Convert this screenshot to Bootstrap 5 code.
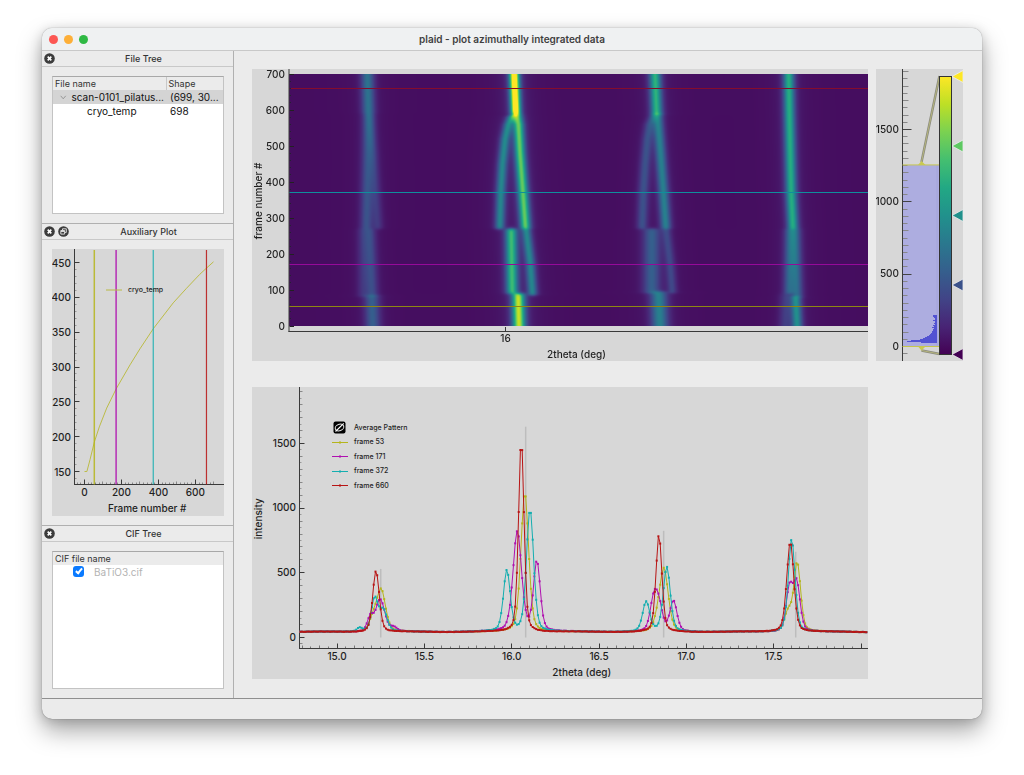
<!DOCTYPE html>
<html lang="en">
<head>
<meta charset="utf-8">
<meta name="viewport" content="width=device-width, initial-scale=1">
<title>plaid - plot azimuthally integrated data</title>
<link rel="stylesheet" href="https://cdn.jsdelivr.net/npm/bootstrap@5.3.0/dist/css/bootstrap.min.css">
<style>
  body { font-family: Inter, "Liberation Sans", sans-serif; font-size: 10px; line-height: 14px; color: #1c1c1c; background: #fff; padding: 28px 42px 56px; }
  .app-window { background: #ebebeb; border-radius: 10px; box-shadow: 0 0 1px rgba(0,0,0,.55), 0 12px 24px rgba(0,0,0,.34), 0 2px 12px rgba(0,0,0,.16); overflow: hidden; }
  .title-bar { height: 23px; background: #eff1f2; border-bottom: 1px solid #c8c8c8; }
  .title-bar h1 { font-size: 10px; line-height: 22px; font-weight: 600; color: #3f3f3f; padding-right: 60px; }
  .lights { width: 60px; padding-left: 7px; gap: 6px; }
  .light { width: 9px; height: 9px; border: 0; padding: 0; border-radius: 50%; background: #fc5753; }
  .light.min { background: #fdaf38; }
  .light.max { background: #2fb944; }
  .side { width: 192px; border-right: 1px solid #b0b0b0; }
  .dock { flex: 172 1 0; min-height: 0; }
  .dock + .dock { border-top: 1px solid #b0b0b0; }
  .dock.tall { flex-grow: 300; }
  .dock-head { height: 16px; border-bottom: 1px solid #c8c8c8; padding: 0 4px 0 2px; gap: 3px; }
  .dock-head h2 { font-size: 9px; line-height: 15px; color: #333; }
  .dock-head button { width: 11px; height: 15px; border: 0; padding: 0; background: none; display: flex; align-items: center; }
  .dock-body { padding: 9px 9px 9px 10px; }
  .tree { background: #fff; border: 1px solid #c3c3c3; border-top-color: #a8a8a8; }
  .tree table { width: 100%; table-layout: fixed; border-collapse: collapse; }
  .tree th { background: #ebebeb; font-size: 9px; line-height: 13px; font-weight: 400; padding: 0 2px; color: #333; }
  .tree th + th { border-left: 1px solid #c8c8c8; }
  .tree td { line-height: 14px; padding: 0 2px; color: #111; white-space: nowrap; overflow: hidden; }
  .tree .picked td { background: #d4d4d4; }
  .tick { appearance: none; width: 11px; height: 11px; margin: 0 0 0 18px; border-radius: 3px; background: #0a7aff; display: grid; place-items: center; }
  .tick:checked::after { content: ""; width: 4px; height: 7px; margin-top: -2px; border: solid #fff; border-width: 0 2px 2px 0; transform: rotate(40deg); }
  .faded { color: #b3b3b3; padding-left: 10px; }
  .plots { display: grid; grid-template-columns: minmax(0,1fr) 87px; grid-template-rows: minmax(0,1fr) minmax(0,1fr); gap: 26px 8px; padding: 18px 19px 19px 18px; min-width: 0; }
  .plot { background: #d7d7d7; min-width: 0; min-height: 0; position: relative; }
  .plot svg, .plot canvas { position: absolute; inset: 0; width: 100%; height: 100%; }
  .plot text { font-size: 10px; font-weight: 500; fill: #1f1f1f; }
  .plot text.key { font-size: 7px; }
  .status-bar { height: 21px; border-top: 1px solid #8f8f8f; }
</style>
</head>
<body class="min-vh-100 d-flex flex-column">
<div class="app-window flex-grow-1 d-flex flex-column">
  <header class="title-bar d-flex align-items-center">
    <div class="lights d-flex">
      <button class="light" aria-label="Close"></button>
      <button class="light min" aria-label="Minimise"></button>
      <button class="light max" aria-label="Zoom"></button>
    </div>
    <h1 class="m-0 flex-grow-1 text-center">plaid - plot azimuthally integrated data</h1>
  </header>

  <div class="flex-grow-1 d-flex">
    <aside class="side d-flex flex-column flex-shrink-0">
      <section class="dock d-flex flex-column">
        <div class="dock-head d-flex">
          <button aria-label="Close File Tree"><svg width="11" height="11" viewBox="0 0 11 11"><circle cx="5.500" cy="5.500" r="5.300" fill="#3c3c3c"/><path d="M3.700 3.700l3.600 3.600M7.300 3.700l-3.600 3.600" stroke="#fff" stroke-width="1.700"/></svg></button>
          <h2 class="m-0 flex-grow-1 text-center">File Tree</h2>
        </div>
        <div class="dock-body flex-grow-1 d-flex">
          <div class="tree flex-grow-1">
            <table>
              <colgroup><col><col style="width:57px"></colgroup>
              <thead><tr><th>File name</th><th>Shape</th></tr></thead>
              <tbody>
                <tr class="picked"><td><span class="d-flex align-items-center"><svg class="ms-1 me-1" width="10" height="7" viewBox="0 0 10 7"><path d="M2 1.500l3 3.500 3-3.500" fill="none" stroke="#8c8c8c"/></svg>scan-0101_pilatus...</span></td><td class="ps-1">(699, 30...</td></tr>
                <tr><td><span class="ms-4 ps-2">cryo_temp</span></td><td class="ps-1">698</td></tr>
              </tbody>
            </table>
          </div>
        </div>
      </section>

      <section class="dock tall d-flex flex-column">
        <div class="dock-head d-flex">
          <button aria-label="Close Auxiliary Plot"><svg width="11" height="11" viewBox="0 0 11 11"><circle cx="5.500" cy="5.500" r="5.300" fill="#3c3c3c"/><path d="M3.700 3.700l3.600 3.600M7.300 3.700l-3.600 3.600" stroke="#fff" stroke-width="1.700"/></svg></button>
          <button aria-label="Float Auxiliary Plot"><svg width="11" height="11" viewBox="0 0 11 11"><circle cx="5.500" cy="5.500" r="5.300" fill="#3c3c3c"/><path d="M4.500 4.300V2.800h3.800v3.600H6.800M2.800 4.500h3.800v3.600H2.800zM3 5.500h3.500" fill="none" stroke="#e8e8e8" stroke-width=".9"/></svg></button>
          <h2 class="m-0 flex-grow-1 text-center pe-1">Auxiliary Plot</h2>
        </div>
        <div class="dock-body flex-grow-1 d-flex"><div class="plot flex-grow-1"><svg id="aux" role="img" aria-label="cryo_temp by frame"></svg></div></div>
      </section>

      <section class="dock d-flex flex-column">
        <div class="dock-head d-flex">
          <button aria-label="Close CIF Tree"><svg width="11" height="11" viewBox="0 0 11 11"><circle cx="5.500" cy="5.500" r="5.300" fill="#3c3c3c"/><path d="M3.700 3.700l3.600 3.600M7.300 3.700l-3.600 3.600" stroke="#fff" stroke-width="1.700"/></svg></button>
          <h2 class="m-0 flex-grow-1 text-center">CIF Tree</h2>
        </div>
        <div class="dock-body flex-grow-1 d-flex">
          <div class="tree flex-grow-1">
            <table>
              <thead><tr><th>CIF file name</th></tr></thead>
              <tbody><tr><td><span class="d-flex align-items-center"><input class="tick" type="checkbox" id="cif" checked><label class="faded" for="cif">BaTiO3.cif</label></span></td></tr></tbody>
            </table>
          </div>
        </div>
      </section>
    </aside>

    <main class="plots flex-grow-1">
      <div class="plot"><canvas id="heat"></canvas><svg id="map" role="img" aria-label="Intensity map"></svg></div>
      <div class="plot"><svg id="levels" role="img" aria-label="Colour levels"></svg></div>
      <div class="plot"><svg id="pattern" role="img" aria-label="Diffraction patterns"></svg></div>
    </main>
  </div>
  <footer class="status-bar"></footer>
</div>

<script src="https://cdn.jsdelivr.net/npm/bootstrap@5.3.0/dist/js/bootstrap.bundle.min.js"></script>
<script>
const INK = '#3a3a3a';
const FRAMES = [[53, '#b5b51c'], [171, '#b010b0'], [372, '#14aeb0'], [660, '#b81414']];
const T0 = 14.785, T1 = 18.04;
const el = id => document.getElementById(id);
const line = (x1, y1, x2, y2, c = INK, w = 1, more = '') => `<line x1="${x1}" y1="${y1}" x2="${x2}" y2="${y2}" stroke="${c}" stroke-width="${w}" ${more}/>`;
const text = (x, y, s, a = 'middle', more = '') => `<text x="${x}" y="${y}" text-anchor="${a}" ${more}>${s}</text>`;
const snap = v => Math.floor(v) + .5;
const poly = (pts, c, w = 1) => `<polyline points="${pts.map(p => p[0].toFixed(1) + ',' + p[1].toFixed(1)).join(' ')}" fill="none" stroke="${c}" stroke-width="${w}"/>`;

// pseudo-Voigt peak
function voigt(x, c, a, f) {
  const u = (x - c) / f;
  return a * (.35 / (1 + 4 * u * u) + .65 * Math.exp(-2.77 * u * u));
}

function drawAux() {
  const s = el('aux'), W = s.clientWidth, H = s.clientHeight, ax = 22.5, ay = H - 30.5;
  const X = v => 32.5 + v * (W - 43) / 698, Y = v => 13.5 + (450 - v) * (H - 57) / 300;
  let o = '';
  for (let v = 140; v <= 450; v += 10) {
    const big = v % 50 === 0;
    o += line(ax, snap(Y(v)), ax + (big ? 5 : 2), snap(Y(v)), big ? INK : '#999');
    if (big) o += text(19, Math.round(Y(v) + 4), v, 'end');
  }
  for (let v = -40; v <= 700; v += 20) {
    const big = v % 200 === 0;
    o += line(snap(X(v)), ay, snap(X(v)), ay - (big ? 5 : v % 100 ? 2 : 3), big ? INK : '#888');
    if (big) o += text(X(v), H - 19, v);
  }
  o += line(ax, 0, ax, ay) + line(ax - .5, ay, W, ay);
  const d = [[0,150],[13,150],[30,167],[53,192],[80,214],[120,241],[172,269],[246,303],[300,326],[372,355],[480,392],[552,413],[624,433],[660,442],[698,451]];
  o += poly(d.map(p => [X(p[0]), Y(p[1])]), '#bcbc48');
  FRAMES.forEach(([f, c], i) => o += line(X(f), 1, X(f), ay, c, i < 2 ? 1.5 : 1.2, 'opacity=".85"'));
  o += line(54, 41, 70, 41, '#b9b945') + text(76, 43, 'cryo_temp', 'start', 'class="key"');
  s.innerHTML = o + text((W + ax) / 2 - 2, H - 3, 'Frame number #');
}

const VIRIDIS = [[68,1,84],[72,36,117],[65,68,135],[53,95,141],[42,120,142],[33,145,140],[34,168,132],[68,191,112],[122,209,81],[189,223,38],[253,231,37]];
function viridis(v) {
  const p = Math.max(0, Math.min(.9999, v)) * 10, i = Math.floor(p), f = p - i;
  return VIRIDIS[i].map((c, k) => c + (VIRIDIS[i + 1][k] - c) * f);
}
// reflection tracks: first frame, last frame, amplitude, width, [frame, 2theta] knots
const TRACKS = [
  [590, 760, 430, .060, [[590,15.232],[700,15.226]]],
  [270, 590, 270, .058, [[270,15.220],[590,15.232]]],
  [270, 590, 150, .050, [[270,15.285],[372,15.272],[480,15.258],[590,15.235]]],
  [82, 270, 240, .060, [[82,15.252],[270,15.236]]],
  [82, 270, 120, .055, [[82,15.200],[270,15.200]]],
  [-60, 85, 330, .070, [[0,15.256],[85,15.250]]],
  [590, 760, 1480, .046, [[588,16.060],[700,16.051]]],
  [270, 590, 900, .050, [[270,16.115],[372,16.100],[480,16.084],[560,16.075],[590,16.064]]],
  [270, 588, 520, .046, [[270,15.970],[372,15.976],[450,15.985],[520,16.000],[560,16.018],[580,16.036],[590,16.056]]],
  [90, 270, 800, .056, [[90,16.040],[270,16.034]]],
  [86, 270, 510, .046, [[86,16.154],[171,16.142],[270,16.118]]],
  [-60, 90, 1100, .060, [[0,16.078],[90,16.073]]],
  [588, 760, 760, .054, [[588,16.852],[700,16.843]]],
  [270, 590, 490, .050, [[270,16.904],[372,16.890],[480,16.874],[590,16.856]]],
  [270, 588, 260, .050, [[270,16.770],[372,16.777],[450,16.787],[520,16.800],[560,16.814],[590,16.842]]],
  [92, 270, 330, .080, [[92,16.824],[270,16.824]]],
  [92, 270, 210, .046, [[92,16.940],[171,16.928],[270,16.905]]],
  [-60, 95, 500, .078, [[0,16.870],[95,16.862]]],
  [270, 760, 730, .052, [[270,17.618],[372,17.608],[588,17.598],[700,17.594]]],
  [90, 270, 330, .054, [[80,17.596],[270,17.602]]],
  [80, 270, 350, .054, [[80,17.642],[270,17.630]]],
  [-60, 82, 560, .050, [[0,17.642],[82,17.634]]],
  [-60, 90, 160, .060, [[0,17.574],[82,17.580]]]
];
function knot(k, f) {
  if (f <= k[0][0]) return k[0][1];
  for (let i = 1; i < k.length; i++) if (f <= k[i][0]) return k[i-1][1] + (k[i][1] - k[i-1][1]) * (f - k[i-1][0]) / (k[i][0] - k[i-1][0]);
  return k[k.length - 1][1];
}
function drawMap() {
  const s = el('map'), W = s.clientWidth, H = s.clientHeight, L = 37, top = 5, bot = H - 35, c = el('heat');
  c.width = W; c.height = H;
  const w = W - L, h = bot - top, g = c.getContext('2d'), im = g.createImageData(w, h);
  for (let y = 0; y < h; y++) {
    const f = 700 * (1 - (y + .5) / h);
    const live = TRACKS.map(t => [knot(t[4], f), t[2] / ((1 + Math.exp((t[0] - f) / 2.5)) * (1 + Math.exp((f - t[1]) / 2.5))), t[3]]).filter(t => t[1] > 1);
    for (let x = 0; x < w; x++) {
      const tt = T0 + (x + .5) / w * (T1 - T0);
      let v = 42;
      for (const p of live) v += voigt(tt, p[0], p[1], p[2]);
      const q = viridis(v / 1255), i = 4 * (y * w + x);
      im.data[i] = q[0]; im.data[i+1] = q[1]; im.data[i+2] = q[2]; im.data[i+3] = 255;
    }
  }
  g.putImageData(im, L, top);
  const Y = v => bot - v * h / 700;
  // frame markers share the image surface
  const dim = ['#8f8712', '#960a9a', '#0f8f9c', '#860c2c'];
  FRAMES.forEach(([f], i) => { g.fillStyle = dim[i]; g.fillRect(L, Math.floor(Y(f)), w, 1); });
  let o = '';
  for (let v = 0; v <= 700; v += 20) {
    const big = v % 100 === 0;
    o += line(L + .5, snap(Y(v)), L + (big ? 5 : 2), snap(Y(v)), big ? '#222' : '#262033');
    if (big) o += text(33, Math.round(Y(v) + 4), v, 'end');
  }
  o += line(L, 0, L, bot + 6) + line(L - .5, bot + 5.5, W, bot + 5.5);
  const x16 = snap(L + (16 - T0) / (T1 - T0) * w);
  o += line(x16, bot + 1, x16, bot + 5) + text(x16, bot + 16, '16');
  o += text((W + L) / 2 - 2, H - 3, '2theta (deg)');
  o += `<text transform="translate(10 ${(bot + top) / 2 + 1}) rotate(-90)" text-anchor="middle">frame number #</text>`;
  s.innerHTML = o;
}

function drawLevels() {
  const s = el('levels'), W = s.clientWidth, H = s.clientHeight, ax = 26.5;
  const Y = v => H - 14.5 - v * (H - 75) / 1500, y0 = Y(0), yt = Y(1255), top = 7, bot = H - 7;
  const stops = VIRIDIS.map((c, i) => `<stop offset="${i * 10}%" stop-color="rgb(${c})"/>`).join('');
  let o = `<defs><linearGradient id="vir" x1="0" y1="1" x2="0" y2="0">${stops}</linearGradient></defs>`;
  o += `<rect x="${ax}" y="${yt}" width="37" height="${y0 - yt}" fill="#adade0"/>`;
  o += line(61, yt, 61, y0, '#a4a4da');
  // histogram: height above the base, bar length
  const hist = [[0,16],[1,30],[2,26],[3,17],[4,14],[5,12],[6,10],[7,8],[8,7],[9,6],[10,5],[11,5],[12,4],[13,4],[14,3],[15,5],[16,3],[17,4],[18,2],[19,3],[20,2],[21,2],[22,4],[23,2],[24,2],[25,3],[26,4],[27,4]];
  hist.forEach(p => o += `<rect x="${61 - p[1]}" y="${Math.round(y0) - 5 - p[0]}" width="${p[1]}" height="1" fill="#5252d2"/>`);
  for (let v = -50; v <= 1900; v += 50) {
    const big = v % 500 === 0;
    o += line(ax, snap(Y(v)), ax + (big ? 9 : v % 100 ? 5 : 6), snap(Y(v)), big ? '#444' : '#888');
    if (big) o += text(23, Math.round(Y(v) + 3), v, 'end');
  }
  o += line(ax, 0, ax, H);
  o += line(ax, yt, 63, yt, '#c6c64e') + line(ax, y0, 63, y0, '#c6c64e');
  const e = [[45.5, yt - 3, 63.5, top], [45.5, y0 + 4, 63.5, bot]];
  e.forEach(p => o += line(...p, '#8b8b80', 2.5) + line(...p, '#b5b57c', 1));
  o += `<path d="M42 ${yt}L45.500 ${yt-4}L49.500 ${yt}ZM42 ${y0}L45.500 ${y0+4}L49.500 ${y0}Z" fill="#c9c950"/>`;
  o += `<rect x="63.500" y="${top + .5}" width="12" height="${bot - top}" fill="url(#vir)" stroke="#333"/>`;
  ['#fde725', '#5ec962', '#21918c', '#3b528b', '#440154'].forEach((c, i) => {
    const y = top + .5 + i * (bot - top) / 4;
    o += `<path d="M76 ${y}L87 ${y-6}V${y+6}Z" fill="${c}" stroke="#eee" stroke-width=".8"/>`;
  });
  s.innerHTML = o;
}

// reflections of each plotted frame: 2theta, amplitude, width
const PEAKS = {
  53: [[15.252,325,.060],[15.205,90,.05],[16.075,1080,.052],[16.872,480,.058],[16.835,60,.05],[17.635,530,.046],[17.583,150,.050]],
  171: [[15.247,250,.062],[15.190,105,.040],[15.325,30,.04],[16.032,775,.058],[16.144,540,.046],[16.813,235,.048],[16.842,190,.048],[16.926,235,.048],[17.590,330,.044],[17.632,370,.046]],
  372: [[15.215,255,.044],[15.264,165,.052],[15.130,30,.04],[15.972,470,.046],[16.105,950,.048],[16.770,230,.048],[16.888,500,.048],[17.603,720,.046]],
  660: [[15.223,475,.044],[16.055,1490,.037],[16.843,750,.040],[17.595,700,.048]]
};
function drawPattern() {
  const s = el('pattern'), W = s.clientWidth, H = s.clientHeight, L = 47.5, ay = H - 30.5;
  const X = t => L + (t - T0) / (T1 - T0) * (W - L), Y = v => H - 41.5 - v * (H - 98) / 1500;
  let o = '';
  for (let v = -50; v <= 1900; v += 50) {
    const big = v % 500 === 0;
    if (v % 100 && v !== -50) { o += line(L, snap(Y(v)), L + 2, snap(Y(v)), '#999'); continue; }
    o += line(L, snap(Y(v)), L + (big ? 5 : 3), snap(Y(v)), big ? INK : '#888');
    if (big) o += text(44, Math.round(Y(v) + 3), v, 'end');
  }
  for (let k = 296; k <= 360; k++) {
    const t = k / 20, x = snap(X(t)), big = k % 10 === 0;
    o += line(x, ay, x, ay - (big ? 5 : k % 2 ? 2 : 3), big ? INK : '#777');
    if (big && k < 360) o += text(X(t), H - 19, t.toFixed(1));
  }
  o += line(L, 0, L, ay) + line(L - .5, ay, W, ay);
  [[15.25, 530], [16.08, 1630], [16.87, 825], [17.626, 663]].forEach(p => o += line(X(p[0]), Y(p[1]), X(p[0]), Y(0), '#bdbdbd', 1.5));
  for (const [f, c] of FRAMES) {
    const pts = [];
    for (let t = T0 + .005, i = 0; t < T1; t += .01, i++) {
      let v = 43 + 2 * Math.sin(i * .13) + Math.sin(i * 1.7 + f);
      for (const p of PEAKS[f]) v += voigt(t, ...p);
      pts.push([X(t), Y(v)]);
    }
    o += poly(pts, c) + pts.map(p => `<rect x="${(p[0] - 1).toFixed(1)}" y="${(p[1] - 1).toFixed(1)}" width="2" height="2" fill="${c}"/>`).join('');
  }
  // legend
  o += '<rect x="81.500" y="34.500" width="12" height="12" rx="2" fill="#000"/><ellipse cx="87.500" cy="40.500" rx="4.400" ry="3.200" fill="none" stroke="#ddd" stroke-width="1.100" transform="rotate(-20 87.500 40.500)"/><path d="M83.500 44.500L91.700 36.300" stroke="#fff" stroke-width="1.100"/>';
  o += text(102, 43, 'Average Pattern', 'start', 'class="key"');
  FRAMES.forEach(([f, c], i) => {
    const y = 55 + i * 14.5;
    o += line(80, snap(y), 96, snap(y), c) + `<rect x="87" y="${snap(y) - 1}" width="2" height="2" fill="${c}"/>` + text(102, Math.round(y + 2), 'frame ' + f, 'start', 'class="key"');
  });
  o += text((W + L) / 2 - 2, H - 3, '2theta (deg)');
  o += `<text transform="translate(10 ${ay / 2 + 1}) rotate(-90)" text-anchor="middle">intensity</text>`;
  s.innerHTML = o;
}
function drawAll() { drawAux(); drawMap(); drawLevels(); drawPattern(); }
drawAll();
addEventListener('resize', drawAll);
</script>
</body>
</html>
